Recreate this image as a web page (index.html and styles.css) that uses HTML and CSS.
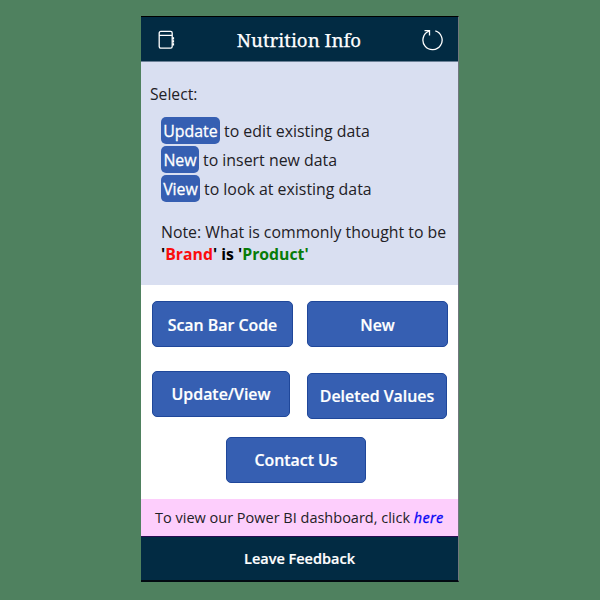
FILE: index.html
```html
<!DOCTYPE html>
<html lang="en">
<head>
<meta charset="utf-8">
<title>Nutrition Info</title>
<link rel="stylesheet" href="styles.css">
</head>
<body>
<main class="phone">
  <header class="bar">
    <svg class="book" viewBox="0 0 18 20" fill="none" stroke="#fff" stroke-width="1.3"><rect x="2.2" y="1.4" width="13" height="16.8" rx="1.6"/><path d="M2.2 5.4h13M15.4 8.4h1.6M15.4 11.4h1.6M15.4 14.4h1.6" /><path d="M16.4 7.3v2.2M16.4 10.3v2.2M16.4 13.3v2.2" stroke-width="1.4"/></svg>
    <h1 class="title">Nutrition Info</h1>
    <svg class="reload" viewBox="0 0 22 22" fill="none" stroke="#fff" stroke-width="1.3"><path d="M14.3 1.9A9.6 9.6 0 1 1 7.9 2.2"/><path d="M3.5 1.7h5v4.8"/></svg>
  </header>
  <section class="intro">
    <p class="select">Select:</p>
    <ul class="actions">
      <li><span class="tag tag-update">Update</span><span>to edit existing data</span></li>
      <li><span class="tag tag-new">New</span><span>to insert new data</span></li>
      <li><span class="tag tag-view">View</span><span>to look at existing data</span></li>
    </ul>
    <p class="note">Note: What is commonly thought to be</p>
    <p class="terms">'<span class="red">Brand</span>' is '<span class="green">Product'</span></p>
  </section>
  <section class="buttons">
    <div class="row">
      <button class="btn scan">Scan Bar Code</button>
      <button class="btn new">New</button>
    </div>
    <div class="row second">
      <button class="btn update">Update/View</button>
      <button class="btn deleted">Deleted Values</button>
    </div>
    <button class="btn contact">Contact Us</button>
  </section>
  <p class="dashboard"><span>To view our Power BI dashboard, click <a class="here">here</a></span></p>
  <footer class="footer">Leave Feedback</footer>
</main>
</body>
</html>
```
FILE: styles.css
```css
* { box-sizing: border-box; }
body {
  margin: 0;
  height: 600px;
  padding-top: 16px;
  background: #4f815f;
  font-family: "Open Sans", sans-serif;
  color: #1f2126;
  overflow: hidden;
}
p, h1, ul { margin: 0; padding: 0; }
.phone {
  width: 318px;
  height: 566px;
  margin-left: 141px;
  border-top: 1px solid #000;
  border-bottom: 2px solid #020a12;
  border-right: 1px solid #70777d;
  background: #fff;
  display: flex;
  flex-direction: column;
  white-space: nowrap;
}
.bar {
  height: 45px;
  flex: none;
  background: #022b43;
  border-bottom: 1px solid #6c8197;
  display: flex;
  align-items: center;
  padding: 0 15px 0 16px;
}
.book { width: 18px; height: 20px; margin-top: 2px; }
.title {
  flex: 1;
  text-align: center;
  font: 400 18.7px "Noto Serif", "Droid Serif", "DejaVu Serif Condensed", serif;
  color: #fff;
  margin: 0 0 0 2px;
  -webkit-text-stroke: 0.25px #fff;
}
.reload { width: 22px; height: 22px; margin-top: 1px; }
.intro { height: 223px; flex: none; background: #d9dff1; padding: 20px 0 0 9px; font-size: 15.9px; }
.select { line-height: 24px; font-size: 15.7px; }
.actions { list-style: none; margin: 11px 0 0 11px; display: grid; gap: 2px; }
.actions li { display: flex; align-items: center; height: 27px; }
.tag {
  height: 27px;
  border-radius: 5px;
  background: #365fb2;
  color: #fff;
  -webkit-text-stroke: 0.3px #fff;
  line-height: 28px;
  text-align: center;
  margin-right: 4px;
}
.tag-update { width: 59px; }
.tag-new { width: 38px; }
.tag-view { width: 39px; }
.note { margin: 19px 0 0 11px; line-height: 22px; font-size: 15.85px; }
.terms { margin-left: 11px; line-height: 22px; font-weight: 700; font-size: 15.8px; color: #000; }
.red { color: #fb0d0d; }
.green { color: #087c08; }
.buttons { flex: 1; padding: 16px 10px 0 11px; }
.row { display: flex; justify-content: space-between; align-items: flex-start; }
.second { margin-top: 24px; }
.btn {
  display: block;
  height: 46px;
  padding: 1px 0 0;
  border: 1px solid #1f479a;
  border-radius: 5px;
  background: #365fb2;
  color: #fff;
  font: 600 15.9px "Open Sans", sans-serif;
  -webkit-text-stroke: 0.2px #fff;
}
.scan, .new { width: 141px; }
.update { width: 138px; padding: 0; }
.update { margin-top: 0; }
.deleted { width: 140px; margin: 2px 1px 0 0; padding: 0 0 1px; }
.contact { width: 140px; margin: 18px 0 0 74px; padding: 0 0 1px; }
.dashboard { height: 37px; line-height: 38px; background: #fdcefc; padding-left: 14px; font-size: 14.5px; }
.here { color: #0505f5; font-style: italic; -webkit-text-stroke: 0.3px #0505f5; letter-spacing: 0.3px; }
.footer { height: 44px; line-height: 44px; background: #022b43; border-top: 1px solid #2a0b52; color: #fff; text-align: center; font-weight: 600; font-size: 14.5px; -webkit-text-stroke: 0.2px #fff; }
```
